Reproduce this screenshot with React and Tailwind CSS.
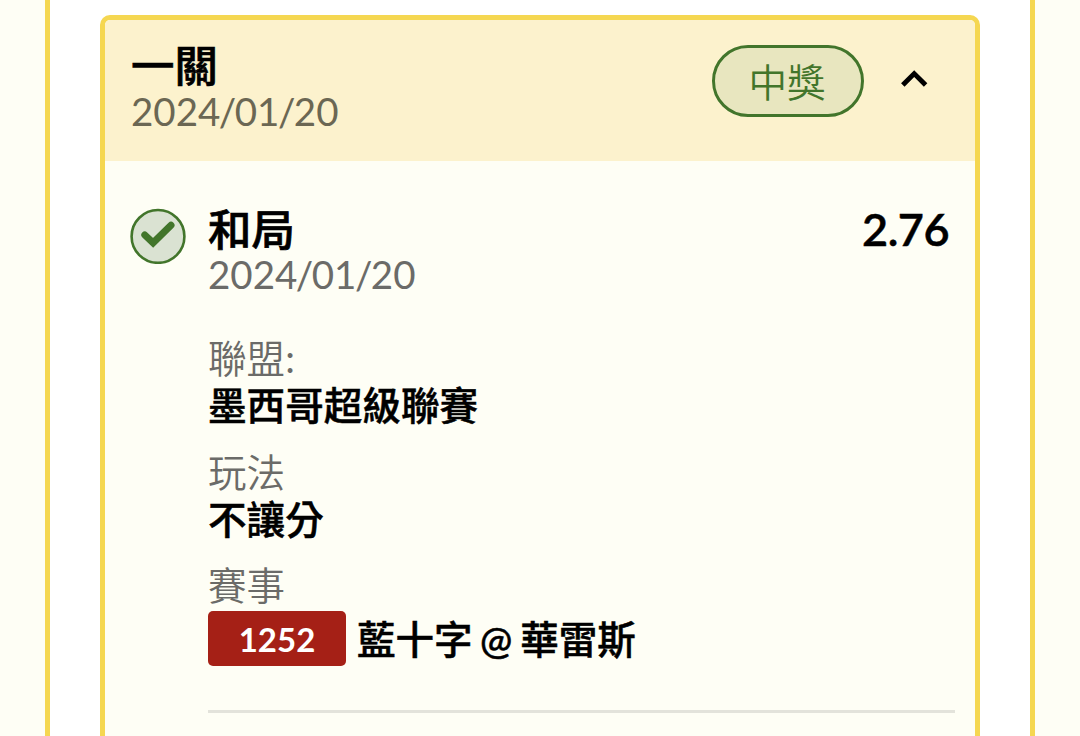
const DateText = ({ parts, className }) => {
  return (
    <span className={className}>
      {parts[0]}
      <span className="-mx-[1.5px]">/</span>
      {parts[1]}
      <span className="-mx-[1.5px]">/</span>
      {parts[2]}
    </span>
  );
};

const Field = ({ label, colon, value }) => {
  return (
    <div className="flex flex-col text-[38.6px]">
      <span className="h-[48px] leading-[48px] text-[#6b6b68] font-[350]">
        {label}
        {colon && <span className="font-normal">:</span>}
      </span>
      <span className="h-[47px] leading-[47px] text-black font-medium [-webkit-text-stroke:0.5px_#000]">{value}</span>
    </div>
  );
};

const CheckBadge = () => {
  return (
    <svg className="block w-14 h-14" viewBox="0 0 56 56" fill="none">
      <circle cx="28" cy="28.4" r="26.4" fill="#dae2d2" stroke="#42752b" strokeWidth="2.6" />
      <path d="M14.8 27L23.1 34.8L41 17.2" stroke="#42752b" strokeWidth="7" strokeLinecap="round" />
    </svg>
  );
};

const Header = () => {
  return (
    <div className="flex justify-between h-[141px] pt-6 pl-[26px] pr-[47px] bg-[#fcf2cd]">
      <div className="flex flex-col">
        <span className="h-[44px] leading-[42px] text-[43.4px] font-medium [-webkit-text-stroke:0.7px_#000] text-black">一關</span>
        <DateText className="h-[46px] leading-[46px] text-[38.5px] text-[#6b6753]" parts={['2024', '01', '20']} />
      </div>
      <div className="flex items-start gap-[36px]">
        <div className="flex items-center justify-center w-[152px] h-[72px] mt-px rounded-full border-[3px] border-[#42752b] bg-[#e8e6bf] text-[38.5px] font-[350] text-[#42752b]">
          <span className="leading-[60px] pt-0.5 pr-0.5">中獎</span>
        </div>
        <svg className="block w-7 h-[18px] mt-[26px]" viewBox="0 0 28 18" fill="none">
          <path d="M2.8 15L14.2 3.6L25.6 15" stroke="#000" strokeWidth="4.9" />
        </svg>
      </div>
    </div>
  );
};

const Ticket = () => {
  return (
    <div className="h-[800px] border-[5px] border-[#f5d751] rounded-[10px] bg-[#fefef5] overflow-hidden">
      <Header />
      <div className="flex pl-[25px] pr-5 pt-[45px]">
        <div className="w-[78px] shrink-0 pt-0.5">
          <CheckBadge />
        </div>
        <div className="flex-1">
          <div className="flex justify-between pr-1.5">
            <div className="flex flex-col">
              <span className="h-[46px] leading-[46px] text-[43.4px] font-medium [-webkit-text-stroke:0.7px_#000] text-black">和局</span>
              <DateText className="h-[45px] leading-[45px] text-[38.5px] text-[#6b6b68]" parts={['2024', '01', '20']} />
            </div>
            <span className="h-[46px] leading-[46px] text-[45px] tracking-[-0.5px] font-semibold [-webkit-text-stroke:0.5px_#000] text-black">2.76</span>
          </div>
          <div className="flex flex-col gap-[19px] pt-[37px]">
            <Field label="聯盟" colon value="墨西哥超級聯賽" />
            <Field label="玩法" value="不讓分" />
            <div className="flex flex-col text-[38.5px]">
              <span className="h-[49px] leading-[47px] text-[#6b6b68] font-[350]">賽事</span>
              <div className="flex items-center gap-[11px]">
                <span className="w-[138px] h-[55px] rounded-[5px] bg-[#a52016] text-center text-[33px] leading-[56px] font-bold text-white">1252</span>
                <div className="flex h-[55px] pt-px leading-[55px] font-medium text-black [-webkit-text-stroke:0.5px_#000]">
                  <span>藍十字</span>
                  <span className="pl-[7.5px] pr-2">@</span>
                  <span>華雷斯</span>
                </div>
              </div>
            </div>
          </div>
          <div className="mt-[44px] h-[3px] bg-[#e3e3db]"></div>
        </div>
      </div>
    </div>
  );
};

const App = () => {
  return (
    <div
      lang="zh-TW"
      className="w-[1080px] h-[736px] overflow-hidden bg-[#fefef5] px-[45px] font-['Lato','Noto_Sans_CJK_TC',sans-serif] whitespace-nowrap"
    >
      <div className="h-full border-x-[5px] border-[#f5d751] bg-white px-[50px] pt-[15px]">
        <Ticket />
      </div>
    </div>
  );
};

export default App;
